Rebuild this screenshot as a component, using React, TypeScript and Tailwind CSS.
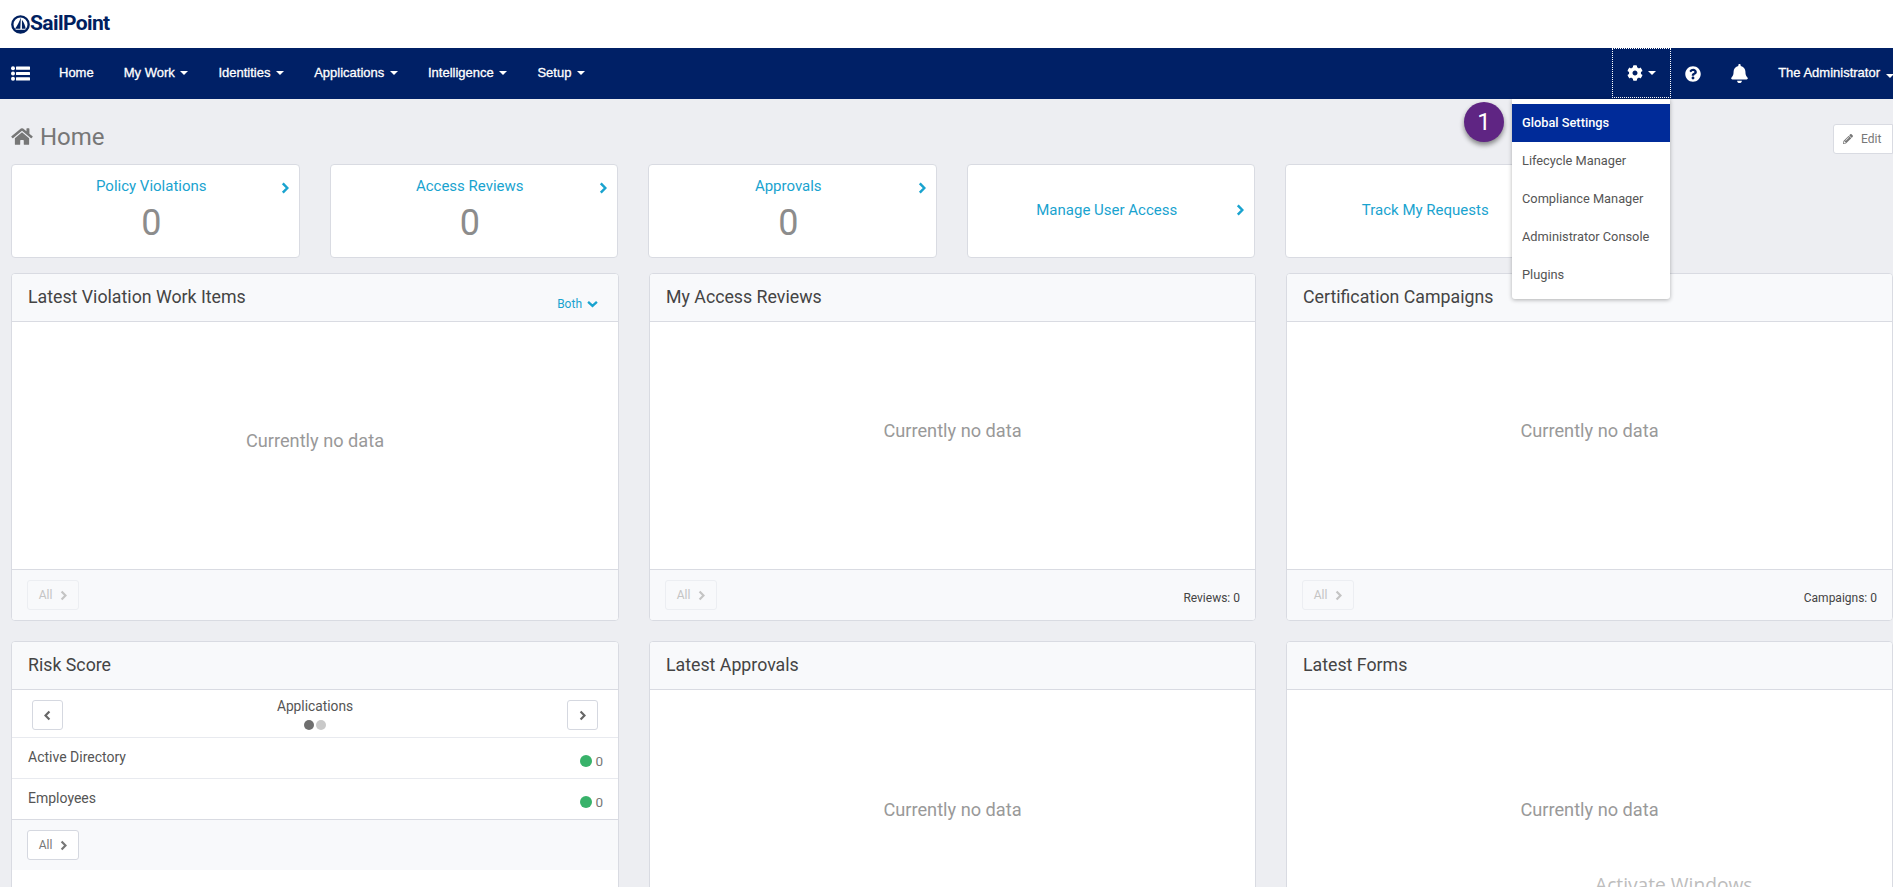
import { FaBell, FaCog, FaHome, FaPencilAlt, FaQuestionCircle } from 'react-icons/fa';

const Caret = () => (
  <span className="inline-block ml-[5.7px] w-0 h-0 border-x-[4px] border-x-transparent border-t-[4px] border-t-white" />
);

const navItems = ['My Work', 'Identities', 'Applications', 'Intelligence', 'Setup'];

const ChevronRight = ({ className }: { className?: string }) => (
  <svg viewBox="0 0 8 12" className={className} fill="none" stroke="currentColor" strokeWidth="2.5">
    <polyline points="1.8,1.4 6.3,6 1.8,10.6" />
  </svg>
);

const ChevronLeft = ({ className }: { className?: string }) => (
  <svg viewBox="0 0 8 12" className={className} fill="none" stroke="currentColor" strokeWidth="2.5">
    <polyline points="6.2,1.4 1.7,6 6.2,10.6" />
  </svg>
);

const ChevronDown = ({ className }: { className?: string }) => (
  <svg viewBox="0 0 12 8" className={className} fill="none" stroke="currentColor" strokeWidth="2.6">
    <polyline points="1.2,1.6 6,6 10.8,1.6" />
  </svg>
);

const MenuIcon = () => (
  <svg width="19" height="15" viewBox="0 0 19 15" className="ml-[11px] shrink-0" fill="white">
    <circle cx="2" cy="2.2" r="2" />
    <circle cx="2" cy="7.5" r="2" />
    <circle cx="2" cy="12.8" r="2" />
    <rect x="5" y="0.6" width="14" height="3.2" rx="0.5" />
    <rect x="5" y="5.9" width="14" height="3.2" rx="0.5" />
    <rect x="5" y="11.2" width="14" height="3.2" rx="0.5" />
  </svg>
);

const SailLogo = () => (
  <svg width="19" height="19" viewBox="0 0 20 20" className="shrink-0">
    <circle cx="10" cy="10" r="8.6" fill="none" stroke="#00205f" strokeWidth="2.5" />
    <path d="M10.4 2.5 C8.8 7 6.8 11 4.2 14.6 L9.8 14.6 Z" fill="#00205f" />
    <path d="M11.5 5 C13.8 8 15 11.2 15.4 14.6 L11.5 14.6 Z" fill="#00205f" />
    <path d="M4.6 15.6 L15.4 15.6 L13.5 18 L6.5 18 Z" fill="#00205f" />
  </svg>
);

const AllButton = ({ disabled }: { disabled?: boolean }) => (
  <button
    className={`flex items-center justify-center gap-[8px] w-[52px] h-[30px] rounded-[3px] border text-[12px] ${
      disabled ? 'bg-[#f8f9fb] border-[#eceef2] text-[#c4c4c4]' : 'bg-white border-[#d5d8e0] text-[#777]'
    }`}
  >
    All
    <ChevronRight className="w-[7px] h-[11px]" />
  </button>
);

const StatCard = ({ title, count }: { title: string; count?: number }) => (
  <div className="relative w-[288.5px] shrink-0 h-[94px] bg-white border border-[#d9dbe2] rounded-[4px] flex flex-col items-center text-center pr-2">
    {count !== undefined ? (
      <>
        <div className="mt-[11px] text-[15px] leading-[20px] text-[#19a3cf]">{title}</div>
        <div className="mt-[6px] text-[36px] leading-[42px] text-[#8c8c8c]">{count}</div>
      </>
    ) : (
      <div className="mt-[35px] text-[15px] leading-[20px] text-[#19a3cf]">{title}</div>
    )}
    <ChevronRight
      className={`absolute right-[10px] w-[8px] h-[12px] text-[#19a3cf] ${count !== undefined ? 'top-[17px]' : 'top-[39px]'}`}
    />
  </div>
);

const Panel = ({ title, emptyOffset, right, head, tall }: { title: string; emptyOffset: string; right?: string; head?: boolean; tall?: boolean }) => (
  <div className={`flex flex-col bg-white border border-[#d9dbe2] rounded-[4px] overflow-hidden ${tall ? 'h-[260px]' : 'h-[348px]'}`}>
    <div className="flex items-center justify-between h-[48px] shrink-0 pl-[16px] pr-[20px] bg-[#f8f9fb] border-b border-[#d9dbe2]">
      <h3 className="text-[17.75px] text-[#444]">{title}</h3>
      {head && (
        <span className="flex items-center gap-[5px] mt-[12px] text-[12px] text-[#19a3cf]">
          Both
          <ChevronDown className="w-[11px] h-[8px]" />
        </span>
      )}
    </div>
    <div className={`flex-1 flex justify-center text-[18.2px] leading-[24px] text-[#999] ${emptyOffset}`}>Currently no data</div>
    {!tall && (
      <div className="flex items-center justify-between h-[51px] shrink-0 pl-[15px] pr-[15px] bg-[#f8f9fb] border-t border-[#d9dbe2]">
        <AllButton disabled />
        {right && <span className="mt-[6px] text-[12px] text-[#444]">{right}</span>}
      </div>
    )}
  </div>
);

const RiskRow = ({ name, last }: { name: string; last?: boolean }) => (
  <div className={`flex items-start justify-between pl-[16px] pr-[15px] ${last ? 'h-[40px]' : 'h-[41px] border-b border-[#e8eaef]'}`}>
    <span className="mt-[9px] text-[14px] leading-[20px] text-[#555]">{name}</span>
    <span className="flex items-center gap-[3px] mt-[13px] text-[13.5px] leading-[20px] text-[#777]">
      <span className="w-[12px] h-[12px] rounded-full bg-[#38b26a]" />0
    </span>
  </div>
);

const RiskPanel = () => (
  <div className="flex flex-col h-[260px] bg-white border border-[#d9dbe2] rounded-[4px] overflow-hidden">
    <div className="flex items-center h-[48px] shrink-0 pl-[16px] bg-[#f8f9fb] border-b border-[#d9dbe2]">
      <h3 className="text-[17.75px] text-[#444]">Risk Score</h3>
    </div>
    <div className="flex items-start justify-between h-[48px] shrink-0 pl-[20px] pr-[20px] pt-[10px] border-b border-[#e8eaef]">
      <button className="flex items-center justify-center w-[31px] h-[30px] rounded-[3px] border border-[#d5d8e0] text-[#666]">
        <ChevronLeft className="w-[7px] h-[11px]" />
      </button>
      <div className="flex flex-col items-center mt-[-4px]">
        <span className="text-[13.75px] leading-[20px] text-[#555]">Applications</span>
        <span className="flex gap-[2px] mt-[4px]">
          <span className="w-[10px] h-[10px] rounded-full bg-[#6f6f6f]" />
          <span className="w-[10px] h-[10px] rounded-full bg-[#c9c9c9]" />
        </span>
      </div>
      <button className="flex items-center justify-center w-[31px] h-[30px] rounded-[3px] border border-[#d5d8e0] text-[#666]">
        <ChevronRight className="w-[7px] h-[11px]" />
      </button>
    </div>
    <RiskRow name="Active Directory" />
    <RiskRow name="Employees" last />
    <div className="flex items-center h-[51px] shrink-0 pl-[15px] bg-[#f8f9fb] border-t border-[#d9dbe2]">
      <AllButton />
    </div>
  </div>
);

const App = () => {
  return (
    <div className="relative w-[1893px] h-[887px] overflow-hidden bg-[#edeef2]" style={{ fontFamily: 'Roboto, sans-serif' }}>
      {/* Logo bar */}
      <div className="flex items-center h-[48px] pl-[11px] bg-white">
        <SailLogo />
        <span className="text-[21px] font-bold tracking-[-0.6px] text-[#00205f]">SailPoint</span>
      </div>

      {/* Nav */}
      <nav
        className="flex items-center h-[51px] bg-[#002066] text-white text-[13px] leading-[17px] [-webkit-text-stroke:0.3px_white]"
        style={{ fontFamily: '"Liberation Sans", Arial, sans-serif' }}
      >
        <MenuIcon />
        <span className="ml-[29px] mb-[2px]">Home</span>
        {navItems.map((label) => (
          <span key={label} className="flex items-center ml-[30px] mb-[2px]">
            {label}
            <Caret />
          </span>
        ))}
        <div className="ml-auto flex items-center h-full">
          <div className="flex items-center justify-center w-[59px] h-[50px] self-start border border-dotted border-white">
            <FaCog className="w-[16px] h-[16px]" />
            <Caret />
          </div>
          <FaQuestionCircle className="ml-[14px] w-[16px] h-[16px]" />
          <FaBell className="ml-[30px] w-[17px] h-[19px]" />
          <span className="ml-[30px] mb-[2px] whitespace-nowrap">The Administrator</span>
          <span className="w-[13px] overflow-hidden">
            <Caret />
          </span>
        </div>
      </nav>

      {/* Page */}
      <main className="pl-[11px]">
        <div className="flex items-start h-[65px]">
          <FaHome className="mt-[28px] w-[22px] h-[19px] text-[#777]" />
          <h1 className="ml-[7px] mt-[24px] text-[24px] leading-[28px] text-[#777]">Home</h1>
          <button className="ml-auto mt-[25px] flex items-center gap-[8px] w-[60px] h-[30px] pl-[9px] bg-white border border-[#d9dbe2] rounded-l-[3px] text-[12px] text-[#777]">
            <FaPencilAlt className="w-[10px] h-[10px]" />
            Edit
          </button>
        </div>

        <div className="flex gap-[30px] h-[94px]">
          <StatCard title="Policy Violations" count={0} />
          <StatCard title="Access Reviews" count={0} />
          <StatCard title="Approvals" count={0} />
          <StatCard title="Manage User Access" />
          <StatCard title="Track My Requests" />
        </div>

        <div className="grid grid-cols-[608px_607px_607px] gap-x-[30px] gap-y-[20px] mt-[15px]">
          <Panel title="Latest Violation Work Items" emptyOffset="pt-[107px]" head />
          <Panel title="My Access Reviews" emptyOffset="pt-[97px]" right="Reviews: 0" />
          <Panel title="Certification Campaigns" emptyOffset="pt-[97px]" right="Campaigns: 0" />
          <RiskPanel />
          <Panel title="Latest Approvals" emptyOffset="pt-[108px]" tall />
          <Panel title="Latest Forms" emptyOffset="pt-[108px]" tall />
        </div>
      </main>

      {/* Open settings menu */}
      <div className="absolute left-[1512px] top-[99px] w-[158px] h-[200px] pt-[5px] bg-white rounded-b-[3px] shadow-[0_1px_4px_rgba(0,0,0,0.3)] text-[12.8px] text-[#555]">
        <div className="flex items-center h-[38px] pl-[10px] bg-[#002b99] text-white font-medium">Global Settings</div>
        <div className="flex items-center h-[38px] pl-[10px]">Lifecycle Manager</div>
        <div className="flex items-center h-[38px] pl-[10px]">Compliance Manager</div>
        <div className="flex items-center h-[38px] pl-[10px]">Administrator Console</div>
        <div className="flex items-center h-[38px] pl-[10px]">Plugins</div>
      </div>

      {/* Step badge */}
      <div className="absolute left-[1464px] top-[102px] flex items-center justify-center w-[40px] h-[40px] rounded-full bg-[#5f2583] text-white text-[24px] shadow-[0_3px_5px_rgba(0,0,0,0.45)]">
        1
      </div>

      {/* Windows watermark */}
      <div className="absolute left-[1595px] top-[871px] text-[19.2px] leading-[28px] text-[#bdbdbd] whitespace-nowrap" style={{ fontFamily: '"Open Sans", sans-serif' }}>
        Activate Windows
      </div>
    </div>
  );
};

export default App;
